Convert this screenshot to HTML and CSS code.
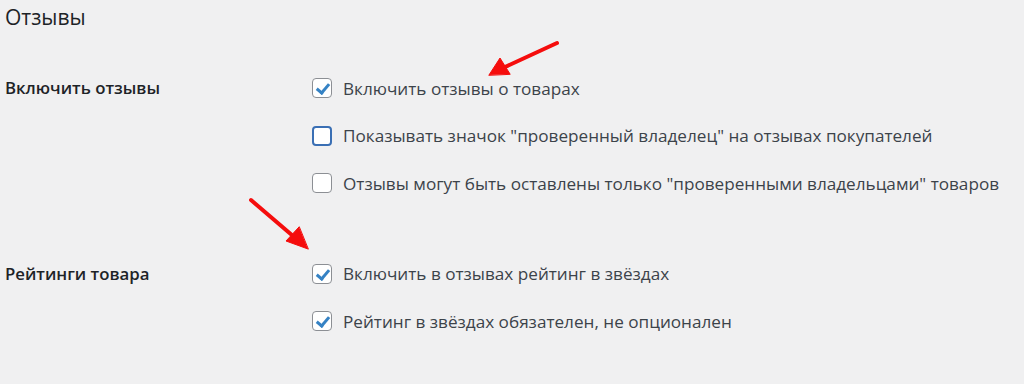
FILE: index.html
```html
<!DOCTYPE html>
<html lang="ru">
<head>
    <meta charset="UTF-8">
    <title>Отзывы</title>
    <link rel="stylesheet" href="styles.css">
</head>
<body>
    <div class="wrap">
        <h2 class="title">Отзывы</h2>
        <div class="row first">
            <div class="label">Включить отзывы</div>
            <div class="options">
                <label class="opt"><span class="box checked"></span>Включить отзывы о товарах</label>
                <label class="opt"><span class="box focus"></span>Показывать значок "проверенный владелец" на отзывах покупателей</label>
                <label class="opt"><span class="box"></span>Отзывы могут быть оставлены только "проверенными владельцами" товаров</label>
            </div>
        </div>
        <div class="row second">
            <div class="label">Рейтинги товара</div>
            <div class="options">
                <label class="opt"><span class="box checked"></span>Включить в отзывах рейтинг в звёздах</label>
                <label class="opt"><span class="box checked"></span>Рейтинг в звёздах обязателен, не опционален</label>
            </div>
        </div>

        <svg class="arrows" width="1024" height="384" viewBox="0 0 1024 384">
            <g stroke="#f50d0d" stroke-width="4" stroke-linecap="round" fill="#f50d0d">
                <line x1="557" y1="43" x2="505" y2="67"/>
                <polygon points="489,75 500,58 510,74" stroke-width="1"/>
                <line x1="251" y1="200" x2="293" y2="236"/>
                <polygon points="308,249 286,241 299,227" stroke-width="1"/>
            </g>
        </svg>
    </div>
</body>
</html>
```

FILE: styles.css
```css
body {
    margin: 0;
    background: #f0f0f1;
    font-family: "Open Sans", "Noto Sans", sans-serif;
    color: #3c434a;
}
.wrap {
    position: relative;
    width: 1024px;
    height: 384px;
    overflow: hidden;
}
.title {
    margin: 0;
    padding: 2px 0 0 5px;
    font-size: 21px;
    font-weight: 500;
    line-height: 30px;
    color: #1d2327;
}
.row {
    display: flex;
}
.row.first {
    margin-top: 43px;
}
.row.second {
    margin-top: 43px;
}
.label {
    width: 312px;
    padding-left: 5px;
    box-sizing: border-box;
    font-size: 16.8px;
    font-weight: 600;
    color: #1d2327;
    line-height: 26px;
}
.options {
    display: flex;
    flex-direction: column;
}
.opt {
    display: flex;
    align-items: center;
    height: 26px;
    margin-bottom: 21.5px;
    font-size: 17.15px;
}
.box {
    width: 20px;
    height: 20px;
    box-sizing: border-box;
    border: 1px solid #8c8f94;
    border-radius: 4px;
    background: #fff;
    margin-right: 11px;
    flex: none;
    position: relative;
}
.box.focus {
    border: 2px solid #3a6fb4;
}
.box.checked::after {
    content: "";
    position: absolute;
    left: 6px;
    top: 2px;
    width: 5px;
    height: 10px;
    border: solid #3582c4;
    border-width: 0 3px 3px 0;
    transform: rotate(40deg);
}
.arrows {
    position: absolute;
    left: 0;
    top: 0;
}
```
